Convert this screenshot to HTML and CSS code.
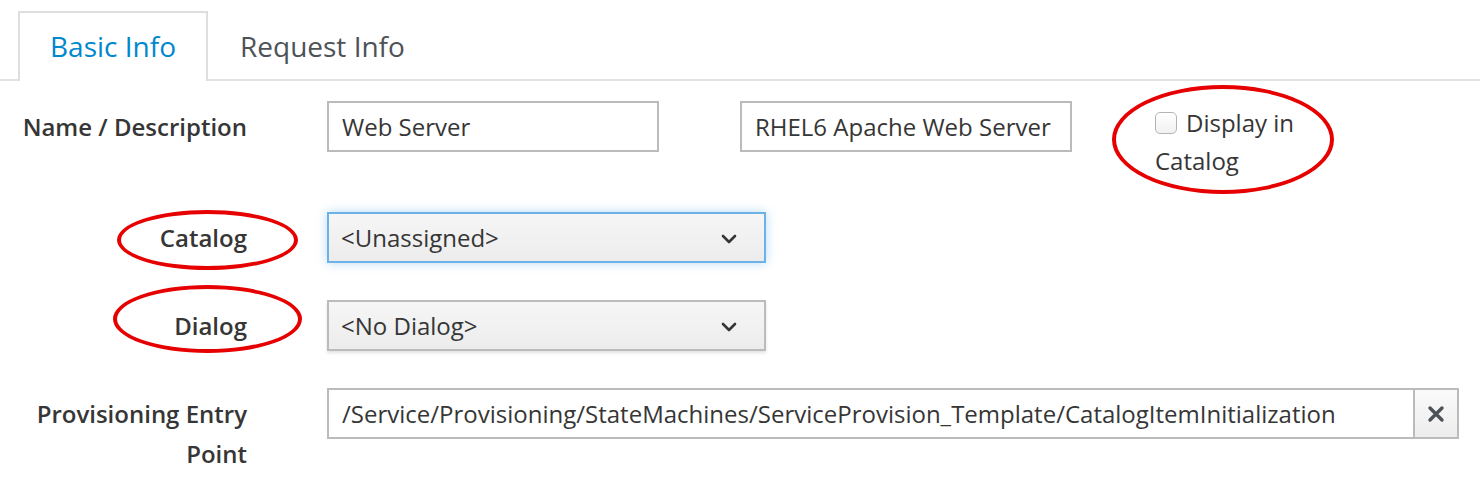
FILE: index.html
```html
<!DOCTYPE html>
<html>
<head>
<meta charset="utf-8">
<link rel="stylesheet" href="styles.css">
</head>
<body>
<div class="page">
  <ul class="tabs">
    <li class="tab active">Basic Info</li>
    <li class="tab">Request Info</li>
  </ul>
  <div class="form">
    <div class="row row-first">
      <div class="label">Name / Description</div>
      <div class="input name">Web Server</div>
      <div class="input desc">RHEL6 Apache Web Server</div>
      <div class="check">
        <span class="box"></span>Display in Catalog
        <span class="ring ring-check"></span>
      </div>
    </div>
    <div class="row row-mid">
      <div class="label">Catalog<span class="ring ring-catalog"></span></div>
      <div class="select focused">&lt;Unassigned&gt;
        <svg class="chev" width="16" height="10" viewBox="0 0 16 10"><path d="M2 2 L8 8 L14 2" fill="none" stroke="#363636" stroke-width="2.6" stroke-linecap="round" stroke-linejoin="round"/></svg>
      </div>
    </div>
    <div class="row row-mid">
      <div class="label">Dialog<span class="ring ring-dialog"></span></div>
      <div class="select">&lt;No Dialog&gt;
        <svg class="chev" width="16" height="10" viewBox="0 0 16 10"><path d="M2 2 L8 8 L14 2" fill="none" stroke="#363636" stroke-width="2.6" stroke-linecap="round" stroke-linejoin="round"/></svg>
      </div>
    </div>
    <div class="row">
      <div class="label">Provisioning Entry Point</div>
      <div class="group">
        <div class="input path">/Service/Provisioning/StateMachines/ServiceProvision_Template/CatalogItemInitialization</div>
        <div class="btn">
          <svg width="18" height="18" viewBox="0 0 18 18"><path d="M3 3 L15 15 M15 3 L3 15" stroke="#4d5258" stroke-width="3.4" stroke-linecap="round"/></svg>
        </div>
      </div>
    </div>
  </div>
</div>
</body>
</html>
```
FILE: styles.css
```css
* { box-sizing: border-box; }
html, body { margin: 0; padding: 0; background: #fff; }
body {
  font-family: "Open Sans", "Noto Sans", sans-serif;
  font-size: 24px;
  color: #363636;
  width: 1480px;
  height: 480px;
  overflow: hidden;
}
.page { padding: 11px 0 0 0; }
.tabs {
  list-style: none;
  margin: 0;
  padding: 0 0 0 18px;
  display: flex;
  border-bottom: 2px solid #e2e2e2;
}
.tab {
  font-size: 28px;
  line-height: 40px;
  padding: 13px 30px 13px 30px;
  border: 2px solid transparent;
  border-bottom: none;
  margin-bottom: -2px;
  color: #4d5258;
}
.tab.active {
  color: #0088ce;
  background: #fff;
  border-color: #dedede;
  padding-bottom: 15px;
}
.form { margin-top: 20px; }
.row { display: flex; align-items: flex-start; }
.row-first { margin-bottom: 32px; }
.row-mid { margin-bottom: 37px; }
.label {
  position: relative;
  width: 240px;
  margin-left: 7px;
  margin-right: 80px;
  text-align: right;
  font-weight: 600;
  line-height: 40px;
  padding-top: 6px;
  color: #363636;
  flex: none;
}
.input {
  height: 51px;
  border: 2px solid #bbb;
  line-height: 47px;
  padding: 0 13px;
  background: #fff;
  white-space: nowrap;
  flex: none;
}
.name { width: 332px; margin-right: 81px; }
.desc { width: 332px; }
.check {
  position: relative;
  width: 170px;
  margin-left: 80px;
  margin-top: 3px;
  line-height: 38px;
  padding-left: 3px;
}
.box {
  display: inline-block;
  width: 22px;
  height: 22px;
  border: 1.5px solid #b4b4b4;
  border-radius: 5px;
  background: linear-gradient(#fff, #f1f1f1);
  vertical-align: -2px;
  margin-right: 9px;
}
.ring {
  position: absolute;
  border: 4px solid #e60000;
  border-radius: 50%;
  pointer-events: none;
}
.ring-check { left: -40px; top: -19px; width: 222px; height: 109px; }
.ring-catalog { left: 110px; top: -2px; width: 181px; height: 60px; }
.ring-dialog { left: 106px; top: -15px; width: 189px; height: 68px; }
.select {
  position: relative;
  width: 439px;
  height: 51px;
  border: 2px solid #bbb;
  background: linear-gradient(#f6f6f6, #ececec);
  line-height: 47px;
  padding: 0 12px;
  box-shadow: 0 2px 3px rgba(0,0,0,0.12);
  flex: none;
}
.select.focused {
  border-color: #6cb2e6;
  box-shadow: 0 0 10px rgba(102,175,233,0.45);
}
.chev { position: absolute; right: 27px; top: 20px; }
.group { display: flex; }
.path { width: 1088px; }
.btn {
  width: 44px;
  height: 51px;
  border: 2px solid #bbb;
  border-left: none;
  background: linear-gradient(#fafafa, #ededed);
  display: flex;
  align-items: center;
  justify-content: center;
}
```
